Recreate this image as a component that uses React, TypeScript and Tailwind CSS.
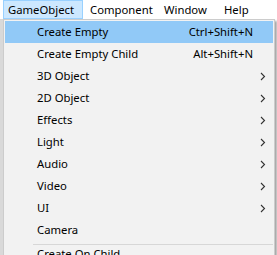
import React from "react";

const items: { label: string; shortcut?: string; sub?: boolean; active?: boolean }[] = [
  { label: "Create Empty", shortcut: "Ctrl+Shift+N", active: true },
  { label: "Create Empty Child", shortcut: "Alt+Shift+N" },
  { label: "3D Object", sub: true },
  { label: "2D Object", sub: true },
  { label: "Effects", sub: true },
  { label: "Light", sub: true },
  { label: "Audio", sub: true },
  { label: "Video", sub: true },
  { label: "UI", sub: true },
  { label: "Camera" },
];

function Chevron() {
  return (
    <svg width="6" height="9" viewBox="0 0 6 9" className="block">
      <path d="M1 1 L4.5 4.5 L1 8" fill="none" stroke="#333" strokeWidth="1.1" />
    </svg>
  );
}

export default function App() {
  return (
    <div
      className="relative w-[277px] h-[255px] overflow-hidden bg-white text-[11.3px] text-black"
      style={{ fontFamily: '"Noto Sans", "Open Sans", sans-serif' }}
    >
      <div className="flex h-[19px] items-stretch bg-white">
        <div className="ml-[3px] flex items-center pl-[4px] w-[80px] bg-[#cce8ff] border border-[#99d1ff] leading-none">
          GameObject
        </div>
        <div className="flex items-center pl-[7px] w-[74px] leading-none">Component</div>
        <div className="flex items-center pl-[7px] w-[60px] leading-none">Window</div>
        <div className="flex items-center pl-[7px] leading-none">Help</div>
      </div>
      <div className="absolute left-0 top-[19px] w-[3px] h-[236px] bg-[#d9d9d9]" />
      <div className="absolute left-[3px] top-[19px] w-[272px] h-[250px] bg-[#f2f2f2] border border-[#cccccc] pt-[1px] px-[1px] shadow-[2px_2px_2px_rgba(0,0,0,0.35)]">
        {items.map((it) => (
          <div
            key={it.label}
            className={
              "flex h-[22px] items-center pl-[32px] pr-[7px] " +
              (it.active ? "bg-[#91c9f7]" : "")
            }
          >
            <span className="flex-1 leading-none">{it.label}</span>
            {it.shortcut && <span className="mr-[13px] leading-none">{it.shortcut}</span>}
            {it.sub && <Chevron />}
          </div>
        ))}
        <div className="ml-[28px] mt-[3px] h-px bg-[#d7d7d7]" />
        <div className="flex h-[14px] items-end pl-[32px] leading-none">Create On Child</div>
      </div>
    </div>
  );
}
